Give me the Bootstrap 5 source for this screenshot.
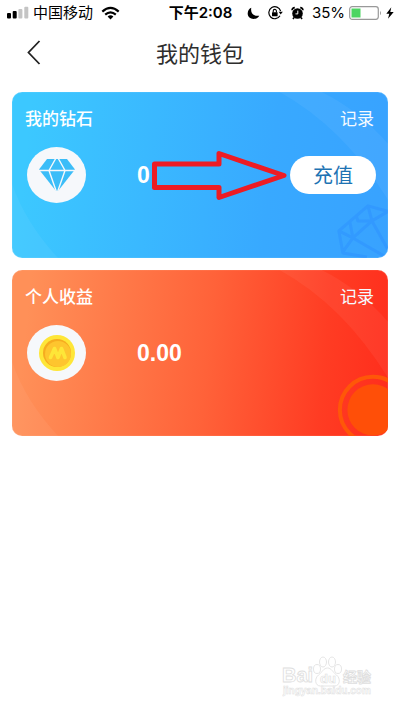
<!DOCTYPE html>
<html lang="zh-CN">
<head>
<meta charset="utf-8">
<meta name="viewport" content="width=device-width, initial-scale=1">
<title>我的钱包</title>
<link href="https://cdn.jsdelivr.net/npm/bootstrap@5.3.0/dist/css/bootstrap.min.css" rel="stylesheet">
<style>
body { font-family: Inter, "Noto Sans CJK SC", sans-serif; background: #fff; color: #111; }
svg { display: block; flex: none; }
.status { height: 26px; padding: 0 6px 0 7px; font-size: 15px; line-height: 24px; color: #000; }
.status-side { flex: 1 1 0; }
.status-time { font-weight: 600; }
.title-bar { height: 54px; padding: 0 48px 2px 20px; }
.title-bar h1 { font-family: "Noto Sans CJK SC", sans-serif; font-size: 22px; line-height: 32px; font-weight: 400; color: #2e2e2e; }
.back { width: 28px; height: 40px; color: #222; }
.wallets { padding: 12px; gap: 12px; }
.wallet { min-height: 166px; border-radius: 10px; padding: 12px 12px 12px 13px; color: #fff; font-family: "Noto Sans CJK SC", sans-serif; }
.diamonds { background: linear-gradient(96deg, #3cc8ff 5%, #38a9ff 68%, #38a2ff); box-shadow: inset 0 0 1px #b5e6ff; }
.income { background: linear-gradient(96deg, #ff9058 5%, #ff6239 52%, #ff3c23 82%, #ff2d1c); box-shadow: inset 0 0 1px #ffc9b0; }
.wallet h2, .record { font-size: 17px; line-height: 27px; }
.wallet h2 { font-weight: 500; }
.record, .record:hover { color: #f5faff; padding-right: 2px; }
.round { width: 59px; height: 56px; border-radius: 50%; background: #f6f8fb; margin-left: 2px; }
.amount { font-family: "Liberation Sans", Arial, sans-serif; font-size: 23px; line-height: 28px; font-weight: 700; margin-left: 51px; }
.recharge { width: 86px; height: 38px; font-size: 20px; line-height: 28px; color: #1e73b3; background: #fff; }
.wave { inset: 0; width: 100%; height: 100%; }
.pointer { left: 139px; top: 58px; }
.watermark { right: 24px; bottom: 8px; font-family: "Liberation Sans", "Noto Sans CJK SC", sans-serif; }
</style>
<script src="https://cdn.jsdelivr.net/npm/bootstrap@5.3.0/dist/js/bootstrap.bundle.min.js"></script>
</head>
<body>
<div class="min-vh-100 d-flex flex-column position-relative">
  <div class="status d-flex align-items-center">
    <div class="status-side d-flex align-items-center">
      <svg width="26" height="14" viewBox="0 0 26 14"><rect y="7" width="4" height="5.500" rx="1"/><rect x="5.700" y="5" width="4" height="7.500" rx="1"/><g fill="#c4c4c4"><rect x="11.400" y="3" width="4" height="9.500" rx="1"/><rect x="17.300" y=".7" width="4" height="11.800" rx="1"/></g></svg>
      <span>中国移动</span>
      <svg class="ms-2" width="19" height="14" viewBox="0 0 19 14" fill="none" stroke="#000" stroke-width="2.200"><path d="M1.300 5.600Q9.500-1.700 17.700 5.600M4.200 8.600Q9.500 4 14.800 8.600"/><path d="M6.600 10.400Q9.500 8 12.400 10.400L9.500 13.400Z" fill="#000" stroke="none"/></svg>
    </div>
    <div class="status-time">下午2:08</div>
    <div class="status-side d-flex align-items-center justify-content-end">
      <svg width="13" height="13" viewBox="0 0 13 13"><path d="M4.300.8C3.200 6 6.500 9.500 12.300 8.700 8.500 14.500.3 12 .7 6.200.9 3.700 2.200 1.600 4.300.8Z"/></svg>
      <svg class="ms-2" width="15" height="14" viewBox="0 0 15 14"><path d="M12.600 5A6 6 0 1 0 12 9.800" fill="none" stroke="#000" stroke-width="1.200"/><path d="M10.600 5.800h4.200l-2.100 2.800z"/><rect x="4" y="6.200" width="5.600" height="4" rx=".5"/><path d="M5.200 6.500V5a1.600 1.600 0 0 1 3.200 0v1.500" fill="none" stroke="#000" stroke-width="1.100"/></svg>
      <svg class="ms-2" width="13" height="14" viewBox="0 0 13 14"><circle cx="6.500" cy="7.500" r="5.300"/><path d="M1 4.200Q1.200 1.700 3.800 1.600M12 4.200Q11.800 1.700 9.200 1.600M3 11.500l-1 1.500M10 11.500l1 1.500" stroke="#000" stroke-width="1.600" fill="none"/><path d="M6.800 4.600v3.300H4.500" fill="none" stroke="#fff" stroke-width="1"/></svg>
      <span class="ms-2">35%</span>
      <svg class="ms-1" width="33" height="14" viewBox="0 0 33 14"><rect x=".7" y=".7" width="28.600" height="12.600" rx="2.500" fill="#fff" stroke="#999" stroke-width="1.200"/><rect x="2.500" y="2.500" width="9" height="9" fill="#4cd562"/><path d="M31 4.700Q33 7 31 9.300Z" fill="#999"/></svg>
      <svg class="ms-1" width="8" height="12" viewBox="0 0 8 12"><path d="M5.300.3.300 6.700h3L2 11.700 7.700 4.900H4.300Z"/></svg>
    </div>
  </div>
  <header class="title-bar d-flex align-items-center">
    <button class="back btn p-0 border-0 d-flex align-items-center justify-content-center" type="button" aria-label="返回"><svg width="14" height="25" viewBox="0 0 14 25" fill="none" stroke="currentColor" stroke-width="1.800"><path d="M12.500 1 1.500 12.500l11 11.500"/></svg></button>
    <h1 class="m-0 flex-fill text-center">我的钱包</h1>
  </header>
  <main class="wallets d-flex flex-column">
    <section class="wallet diamonds position-relative overflow-hidden d-flex flex-column">
      <svg class="wave position-absolute" viewBox="0 0 375 166" preserveAspectRatio="xMaxYMax slice" fill="none">
        <path d="M266 0Q330 35 375 108V52Q345 18 308 0Z" fill="#fff" opacity=".05"/>
        <path d="M0 92Q14 132 46 166H0Z" fill="#fff" opacity=".05"/>
        <g stroke="#2585ff" stroke-width="3" opacity=".32" stroke-linejoin="round"><path d="M377 120 355 114 326 139 330 161 354 165M330 160 340 146 359 129 376 119M355 114 359 129H345L343 123M337 130 340 146 326 139M340 146 378 168M359 129 378 163"/></g>
      </svg>
      <div class="d-flex justify-content-between position-relative"><h2 class="m-0">我的钻石</h2><a href="#diamond-log" class="record text-decoration-none">记录</a></div>
      <div class="d-flex align-items-center position-relative mt-3">
        <div class="round d-flex align-items-center justify-content-center"><svg width="38" height="34" viewBox="0 0 38 34"><path d="M9 1h20l8 10.500L20 33h-2L1 11.500Z" fill="#3bbdf8"/><path d="M0 12.500h38M18 0l-7 12.500L18.500 34M20 0l7 12.500L19.500 34" fill="none" stroke="#f6f8fb" stroke-width="1.400"/></svg></div>
        <span class="amount">0</span>
        <button type="button" class="recharge btn rounded-pill border-0 p-0 ms-auto">充值</button>
      </div>
      <svg class="pointer position-absolute" width="137" height="52" viewBox="0 0 137 52" fill="none" stroke="#ed1c24" stroke-width="5" stroke-linejoin="round"><path d="M3.500 14H68V3.500L133 25.500 68 47.500V37.500H3.500Z"/></svg>
    </section>
    <section class="wallet income position-relative overflow-hidden d-flex flex-column">
      <svg class="wave position-absolute" viewBox="0 0 375 166" preserveAspectRatio="xMaxYMax slice" fill="none">
        <path d="M266 0Q330 35 375 108V52Q345 18 308 0Z" fill="#fff" opacity=".05"/>
        <path d="M0 92Q14 132 46 166H0Z" fill="#fff" opacity=".05"/>
        <circle cx="360" cy="140" r="33" stroke="#ff5708" stroke-width="4"/><circle cx="360" cy="140" r="25.500" fill="#ff4f08"/>
      </svg>
      <div class="d-flex justify-content-between position-relative"><h2 class="m-0">个人收益</h2><a href="#income-log" class="record text-decoration-none">记录</a></div>
      <div class="d-flex align-items-center position-relative mt-3">
        <div class="round d-flex align-items-center justify-content-center"><svg width="38" height="38" viewBox="0 0 38 38"><circle cx="19" cy="19" r="18" fill="#fee638"/><circle cx="19" cy="19" r="14" fill="#f6ac1f"/><circle cx="20" cy="20" r="13" fill="#fec52e"/><path d="m12.500 23.500 4-9 3.500 9 3.500-9 3.500 9" fill="none" stroke="#fee638" stroke-width="3.600" stroke-linejoin="round" stroke-linecap="round"/></svg></div>
        <span class="amount">0.00</span>
      </div>
    </section>
  </main>
  <svg class="watermark position-absolute" width="94" height="48" viewBox="0 0 94 48" fill="#fff" stroke="#dedede" stroke-width=".8">
    <text x="0" y="28" font-size="20" font-weight="700">Bai</text>
    <ellipse cx="35" cy="15" rx="3.500" ry="4.500"/><ellipse cx="41" cy="8" rx="3.500" ry="5"/><ellipse cx="50" cy="8" rx="3.500" ry="5"/><ellipse cx="56" cy="15" rx="3.500" ry="4.500"/>
    <path d="M45.500 14c4 0 5 4 9 7s4 11-2 11h-14c-6 0-6-8-2-11s5-7 9-7Z"/>
    <text x="38" y="29" font-size="13" font-weight="700" stroke-width=".6">du</text>
    <text x="61" y="28" font-size="14" font-weight="700">经验</text>
    <text x="1" y="40" font-size="10" font-weight="700" stroke-width=".5">jingyan.baidu.com</text>
  </svg>
</div>
</body>
</html>
